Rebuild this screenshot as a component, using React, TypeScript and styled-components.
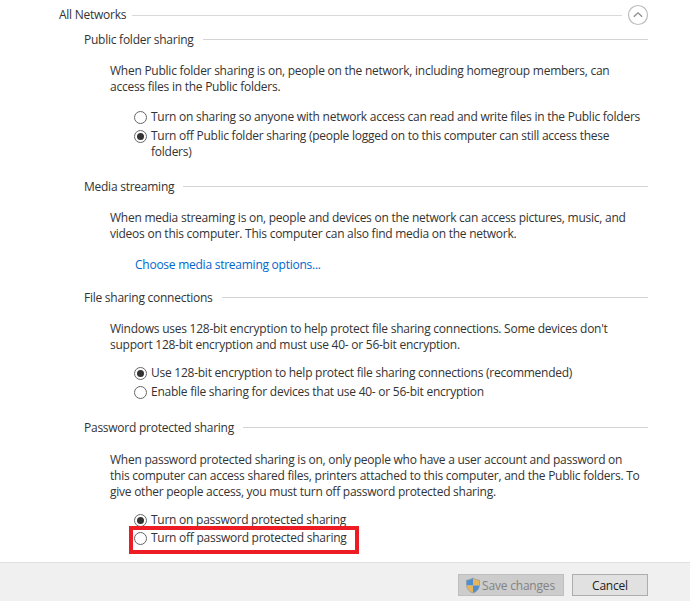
import React from 'react';
import styled, { createGlobalStyle } from 'styled-components';

const GlobalStyle = createGlobalStyle`
  html, body { margin: 0; padding: 0; background: #fff; }
  body { font-family: "Open Sans", "Liberation Sans", sans-serif; font-size: 12px; color: #2b2b2b; }
`;

const Page = styled.div`
  width: 690px;
  height: 601px;
  display: flex;
  flex-direction: column;
  overflow: hidden;
`;

const Content = styled.div`
  flex: 1;
  padding: 5px 42px 0 59px;
`;

const GroupHeader = styled.div`
  display: flex;
  align-items: center;
  height: 18px;
  margin-right: -1px;
`;

const GroupTitle = styled.span`
  letter-spacing: -0.25px;
  color: #333;
`;

const GroupLine = styled.div`
  flex: 1;
  height: 1px;
  margin: 2px 5px 0 6px;
  background: #d9d9d9;
`;

const Collapse = styled.svg`
  width: 22px;
  height: 22px;
  flex: none;
  margin-top: 2px;
`;

const Section = styled.section`
  margin-left: 25px;
  margin-top: ${p => p.$top}px;
`;

const SectionHeader = styled.div`
  display: flex;
  align-items: center;
  height: 16px;
`;

const SectionLine = styled.div`
  flex: 1;
  height: 1px;
  margin-left: 9px;
  background: #d4d4d4;
`;

const Paragraph = styled.p`
  margin: ${p => p.$top ?? 15}px 0 0 26px;
  line-height: ${p => p.$line ?? 16.4}px;
  letter-spacing: -0.25px;
  color: #333;
`;

const OptionList = styled.div`
  margin: ${p => p.$top}px 0 0 50px;
  display: flex;
  flex-direction: column;
`;

const Option = styled.div`
  position: relative;
  display: flex;
  align-items: flex-start;
  gap: 4px;
  line-height: 16px;
  letter-spacing: -0.25px;
  color: #333;
  margin-top: ${p => p.$gap ?? 0}px;

  ${p => p.$marked && `
    &::after {
      content: '';
      position: absolute;
      left: -5px;
      top: -4px;
      width: 222px;
      height: 20px;
      border: 4px solid #ed1c24;
    }
  `}
`;

const Radio = styled.span`
  flex: none;
  box-sizing: border-box;
  width: 13px;
  height: 13px;
  margin-top: 2px;
  border-radius: 50%;
  border: 1px solid #666;
  background: #fff;
  display: flex;
  align-items: center;
  justify-content: center;

  &::after {
    content: '';
    width: 7px;
    height: 7px;
    border-radius: 50%;
    background: ${p => (p.$checked ? '#333' : 'transparent')};
  }
`;

const MediaLink = styled.a`
  display: block;
  margin: 14px 0 0 51px;
  line-height: 16px;
  letter-spacing: -0.25px;
  color: #0066cc;
`;

const Footer = styled.div`
  box-sizing: border-box;
  height: 39px;
  flex: none;
  border-top: 1px solid #dfdfdf;
  background: #f0f0f0;
  display: flex;
  justify-content: flex-end;
  align-items: flex-start;
  gap: 8px;
  padding: 11px 42px 0 0;
`;

const Button = styled.button`
  box-sizing: border-box;
  height: 22px;
  width: ${p => p.$width}px;
  padding: 0;
  border: 1px solid ${p => (p.disabled ? '#bfbfbf' : '#adadad')};
  background: ${p => (p.disabled ? '#cccccc' : '#e1e1e1')};
  color: ${p => (p.disabled ? '#838383' : '#222')};
  font: inherit;
  letter-spacing: -0.2px;
  display: flex;
  align-items: center;
  justify-content: center;
  gap: 1px;
`;

const Shield = styled.svg`
  width: 16px;
  height: 17px;
  flex: none;
  margin-left: -2px;
`;

type Opt = { label: React.ReactNode; checked?: boolean; gap?: number; marked?: boolean };

const Options = ({ top, items }: { top: number; items: Opt[] }) => (
  <OptionList $top={top}>
    {items.map((o, i) => (
      <Option key={i} $gap={o.gap} $marked={o.marked}>
        <Radio $checked={o.checked} />
        <span>{o.label}</span>
      </Option>
    ))}
  </OptionList>
);

export default function App() {
  return (
    <Page>
      <GlobalStyle />
      <Content>
        <GroupHeader>
          <GroupTitle>All Networks</GroupTitle>
          <GroupLine />
          <Collapse viewBox="0 0 22 22" fill="none">
            <circle cx="11" cy="11" r="9.5" stroke="#bdbdbd" strokeWidth="1.2" />
            <path d="M6.8 12.8 11 8.8l4.2 4" stroke="#8c8c8c" strokeWidth="1.3" />
          </Collapse>
        </GroupHeader>

        <Section $top={8}>
          <SectionHeader>
            <GroupTitle>Public folder sharing</GroupTitle>
            <SectionLine />
          </SectionHeader>
          <Paragraph $top={16}>
            When Public folder sharing is on, people on the network, including homegroup members, can
            <br />
            access files in the Public folders.
          </Paragraph>
          <Options
            top={13}
            items={[
              { label: 'Turn on sharing so anyone with network access can read and write files in the Public folders' },
              {
                label: (
                  <>
                    Turn off Public folder sharing (people logged on to this computer can still access these
                    <br />
                    folders)
                  </>
                ),
                checked: true,
                gap: 3,
              },
            ]}
          />
        </Section>

        <Section $top={19}>
          <SectionHeader>
            <GroupTitle>Media streaming</GroupTitle>
            <SectionLine />
          </SectionHeader>
          <Paragraph>
            When media streaming is on, people and devices on the network can access pictures, music, and
            <br />
            videos on this computer. This computer can also find media on the network.
          </Paragraph>
          <MediaLink>Choose media streaming options...</MediaLink>
        </Section>

        <Section $top={17}>
          <SectionHeader>
            <GroupTitle>File sharing connections</GroupTitle>
            <SectionLine />
          </SectionHeader>
          <Paragraph>
            Windows uses 128-bit encryption to help protect file sharing connections. Some devices don't
            <br />
            support 128-bit encryption and must use 40- or 56-bit encryption.
          </Paragraph>
          <Options
            top={12}
            items={[
              { label: 'Use 128-bit encryption to help protect file sharing connections (recommended)', checked: true },
              { label: 'Enable file sharing for devices that use 40- or 56-bit encryption', gap: 3 },
            ]}
          />
        </Section>

        <Section $top={19}>
          <SectionHeader>
            <GroupTitle>Password protected sharing</GroupTitle>
            <SectionLine />
          </SectionHeader>
          <Paragraph $top={17} $line={16}>
            When password protected sharing is on, only people who have a user account and password on
            <br />
            this computer can access shared files, printers attached to this computer, and the Public folders. To
            <br />
            give other people access, you must turn off password protected sharing.
          </Paragraph>
          <Options
            top={12}
            items={[
              { label: 'Turn on password protected sharing', checked: true },
              { label: 'Turn off password protected sharing', gap: 2, marked: true },
            ]}
          />
        </Section>
      </Content>
      <Footer>
        <Button $width={106} disabled>
          <Shield viewBox="0 0 16 17">
            <path d="M8 1C6 2.300 4 3 1.500 3.200V8.500H8z" fill="#4f8fd0" />
            <path d="M8 1c2 1.300 4 2 6.500 2.200V8.500H8z" fill="#e8b45c" />
            <path d="M1.500 8.500H8V16C4.500 14.800 2 12.500 1.500 8.500z" fill="#e8b45c" />
            <path d="M14.500 8.500H8V16c3.500-1.200 6-3.500 6.500-7.500z" fill="#4f8fd0" />
            <path d="M8 1C6 2.300 4 3 1.500 3.200V8.500C2 12.500 4.500 14.800 8 16c3.500-1.200 6-3.500 6.500-7.500V3.200C12 3 10 2.300 8 1z" fill="none" stroke="#8d9aa8" strokeWidth="0.7" />
          </Shield>
          Save changes
        </Button>
        <Button $width={76}>Cancel</Button>
      </Footer>
    </Page>
  );
}
